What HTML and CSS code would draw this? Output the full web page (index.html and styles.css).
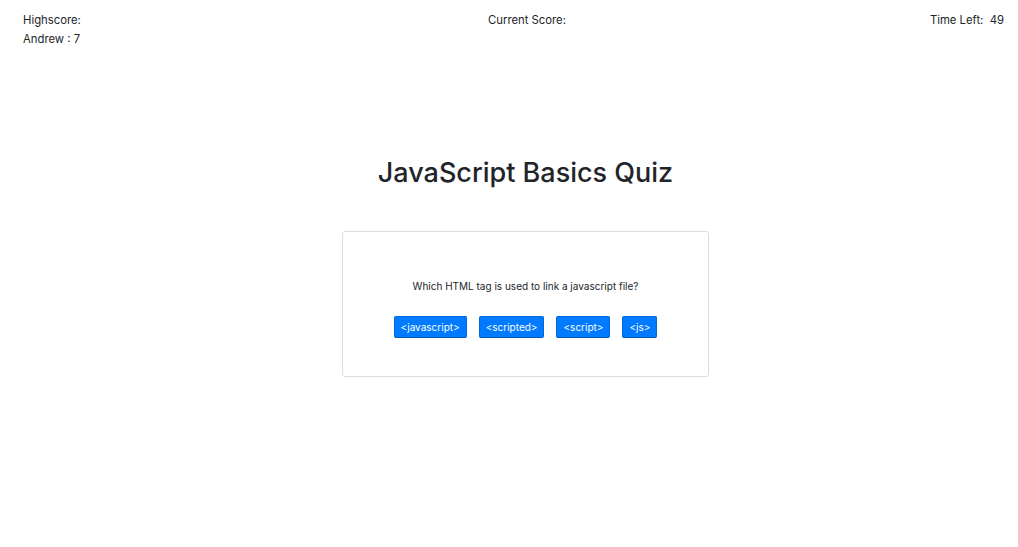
FILE: index.html
```html
<!DOCTYPE html>
<html>
<head>
<meta charset="utf-8">
<link rel="stylesheet" href="styles.css">
</head>
<body>
<header class="topbar">
  <div class="hs">
    <div>Highscore:</div>
    <div>Andrew : 7</div>
  </div>
  <div class="current">Current Score: <span></span></div>
  <div class="timer">Time Left:&nbsp; 49</div>
</header>
<main class="main">
  <h1 class="title">JavaScript Basics Quiz</h1>
  <section class="card">
    <p class="question">Which HTML tag is used to link a javascript file?</p>
    <div class="answers">
      <button class="btn">&lt;javascript&gt;</button>
      <button class="btn">&lt;scripted&gt;</button>
      <button class="btn">&lt;script&gt;</button>
      <button class="btn">&lt;js&gt;</button>
    </div>
  </section>
</main>
</body>
</html>
```
FILE: styles.css
```css
html, body {
  margin: 0;
  padding: 0;
  background: #fff;
  color: #212529;
  font-family: Inter, "Liberation Sans", sans-serif;
}
.topbar {
  display: grid;
  grid-template-columns: 1fr auto 1fr;
  padding: 11px 14px 0 23px;
  font-size: 11.3px;
  line-height: 19px;
}
.current {
  padding-left: 27px;
}
.timer {
  text-align: right;
}
.main {
  display: flex;
  flex-direction: column;
  align-items: center;
  padding-left: 33px;
}
.title {
  margin: 107px 0 0;
  font-size: 27px;
  font-weight: 500;
  line-height: 34px;
}
.card {
  margin-top: 41px;
  width: 365px;
  height: 144px;
  border: 1px solid #dcdcdc;
  border-radius: 3px;
  display: flex;
  flex-direction: column;
  align-items: center;
}
.question {
  margin: 46px 0 0;
  font-size: 10px;
  line-height: 16px;
}
.answers {
  display: flex;
  gap: 12px;
  margin-top: 22px;
}
.btn {
  height: 22px;
  padding: 0 6px;
  background: #007bff;
  color: #fff;
  border: 1px solid #0069d9;
  border-bottom-color: #0056b3;
  border-radius: 2px;
  font-family: Inter, "Liberation Sans", sans-serif;
  font-size: 10px;
}
```
